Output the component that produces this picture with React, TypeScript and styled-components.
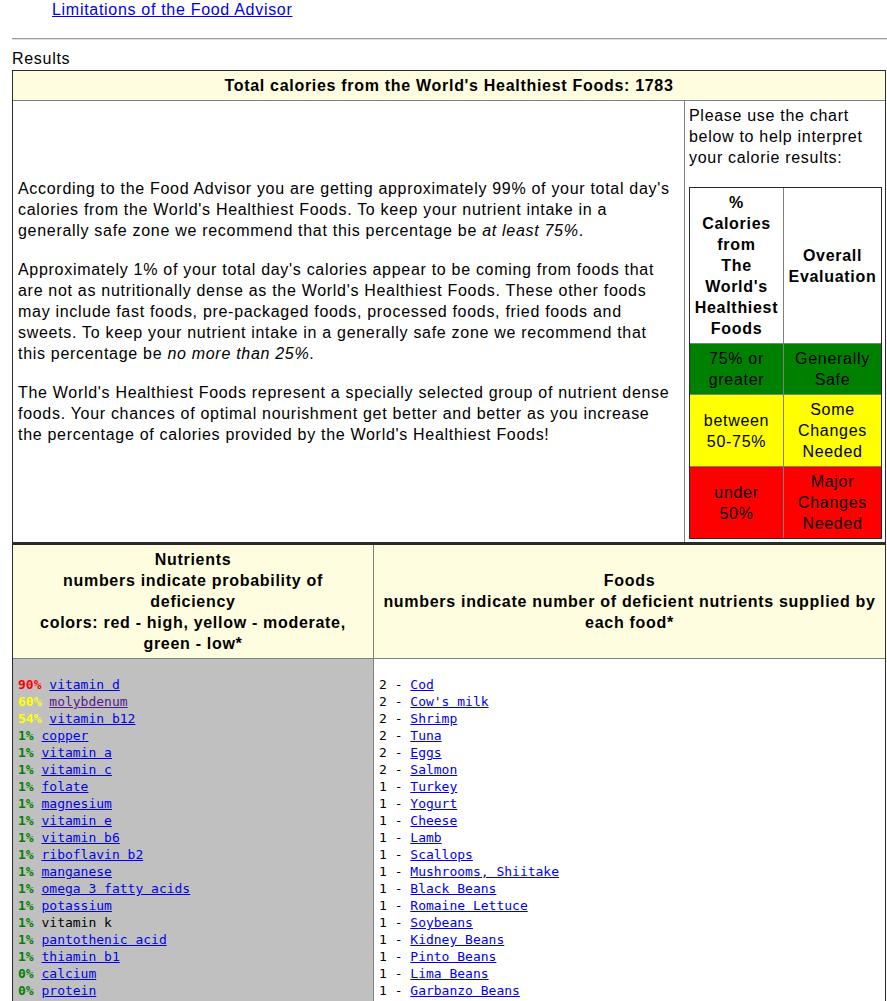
import React from "react";
import styled, { createGlobalStyle } from "styled-components";

const GlobalStyle = createGlobalStyle`
  body {
    margin: 0;
    background: #fff;
    font-family: "Liberation Sans", Arial, sans-serif;
    font-size: 16px;
    letter-spacing: 0.7px;
    color: #000;
  }
`;

const Page = styled.div`
  padding: 0 2px 0 12px;
  line-height: 21px;
`;

const TopLink = styled.a`
  display: block;
  margin-left: 40px;
  line-height: 20px;
  color: #0000ee;
`;

const Rule = styled.hr`
  margin: 18px -2px 8px 0;
  border: none;
  border-top: 1px solid #a0a0a0;
  border-bottom: 1px solid #e0e0e0;
`;

const Caption = styled.div`
  line-height: 21px;
  margin-bottom: 1px;
`;

const Table = styled.table<{ $topWidth?: number }>`
  width: 874px;
  border-collapse: separate;
  border-spacing: 0;
  border: 1px solid #2b2b2b;
  border-top-width: ${(p) => p.$topWidth ?? 1}px;
  line-height: 21px;

  & > tbody > tr > td {
    border-left: 1px solid #808080;
    border-top: 1px solid #808080;
  }
  & > tbody > tr > td:first-child {
    border-left: none;
  }
  & > tbody > tr:first-child > td {
    border-top: none;
  }
`;

const HeadCell = styled.td<{ $width?: number }>`
  background: #fffddf;
  font-weight: bold;
  text-align: center;
  vertical-align: middle;
  padding: 4px 6px;
  width: ${(p) => (p.$width ? `${p.$width}px` : "auto")};
`;

const TextCell = styled.td`
  vertical-align: middle;
  padding: 4px 11px 25px 5px;
`;

const Para = styled.p`
  margin: 0 0 18px;
  &:last-child {
    margin-bottom: 0;
  }
`;

const SideCell = styled.td`
  width: 192px;
  vertical-align: top;
  padding: 4px 3px 3px 4px;
`;

const ChartIntro = styled.div`
  margin-bottom: 19px;
`;

const Chart = styled.table`
  width: 193px;
  border-collapse: separate;
  border-spacing: 0;
  border: 1px solid #2b2b2b;
  line-height: 21px;

  & td {
    border-left: 1px solid #808080;
    border-top: 1px solid #808080;
    text-align: center;
    vertical-align: middle;
    padding: 4px 1px;
  }
  & td:first-child {
    border-left: none;
    width: 91px;
  }
  & tr:first-child td {
    border-top: none;
  }
`;

const ChartHead = styled.td`
  font-weight: bold;
`;

const ChartCell = styled.td<{ $bg: string }>`
  background: ${(p) => p.$bg};
`;

const ListCell = styled.td<{ $gray?: boolean }>`
  background: ${(p) => (p.$gray ? "#c0c0c0" : "#fff")};
  vertical-align: top;
  padding: 17px 5px 10px;
  font-family: "DejaVu Sans Mono", "Liberation Mono", monospace;
  font-size: 13px;
  letter-spacing: normal;
  line-height: 17px;
`;

const Line = styled.div`
  white-space: pre;
`;

const Pct = styled.span<{ $color: string }>`
  color: ${(p) => p.$color};
  font-weight: bold;
`;

const Link = styled.a<{ $visited?: boolean }>`
  color: ${(p) => (p.$visited ? "#551a8b" : "#0000ee")};
  text-decoration: underline;
`;

type Nutrient = { pct: string; name: string; link?: boolean; visited?: boolean };

const RED = "#ff0000";
const YELLOW = "#ffff00";
const GREEN = "#008000";

const nutrients: Nutrient[] = [
  { pct: "90%", name: "vitamin d" },
  { pct: "60%", name: "molybdenum", visited: true },
  { pct: "54%", name: "vitamin b12" },
  { pct: "1%", name: "copper" },
  { pct: "1%", name: "vitamin a" },
  { pct: "1%", name: "vitamin c" },
  { pct: "1%", name: "folate" },
  { pct: "1%", name: "magnesium" },
  { pct: "1%", name: "vitamin e" },
  { pct: "1%", name: "vitamin b6" },
  { pct: "1%", name: "riboflavin b2" },
  { pct: "1%", name: "manganese" },
  { pct: "1%", name: "omega 3 fatty acids" },
  { pct: "1%", name: "potassium" },
  { pct: "1%", name: "vitamin k", link: false },
  { pct: "1%", name: "pantothenic acid" },
  { pct: "1%", name: "thiamin b1" },
  { pct: "0%", name: "calcium" },
  { pct: "0%", name: "protein" },
];

const foods: [number, string][] = [
  [2, "Cod"],
  [2, "Cow's milk"],
  [2, "Shrimp"],
  [2, "Tuna"],
  [2, "Eggs"],
  [2, "Salmon"],
  [1, "Turkey"],
  [1, "Yogurt"],
  [1, "Cheese"],
  [1, "Lamb"],
  [1, "Scallops"],
  [1, "Mushrooms, Shiitake"],
  [1, "Black Beans"],
  [1, "Romaine Lettuce"],
  [1, "Soybeans"],
  [1, "Kidney Beans"],
  [1, "Pinto Beans"],
  [1, "Lima Beans"],
  [1, "Garbanzo Beans"],
];

function pctColor(pct: string) {
  const n = parseInt(pct, 10);
  if (n >= 75) return RED;
  if (n >= 50) return YELLOW;
  return GREEN;
}

export default function App() {
  return (
    <Page>
      <GlobalStyle />
      <TopLink href="#">Limitations of the Food Advisor</TopLink>
      <Rule />
      <Caption>Results</Caption>

      <Table>
        <tbody>
          <tr>
            <HeadCell colSpan={2}>Total calories from the World's Healthiest Foods: 1783</HeadCell>
          </tr>
          <tr>
            <TextCell>
              <Para>
                According to the Food Advisor you are getting approximately 99% of your total day's
                calories from the World's Healthiest Foods. To keep your nutrient intake in a
                generally safe zone we recommend that this percentage be <i>at least 75%</i>.
              </Para>
              <Para>
                Approximately 1% of your total day's calories appear to be coming from foods that
                are not as nutritionally dense as the World's Healthiest Foods. These other foods
                may include fast foods, pre-packaged foods, processed foods, fried foods and
                sweets. To keep your nutrient intake in a generally safe zone we recommend that
                this percentage be <i>no more than 25%</i>.
              </Para>
              <Para>
                The World's Healthiest Foods represent a specially selected group of nutrient dense
                foods. Your chances of optimal nourishment get better and better as you increase
                the percentage of calories provided by the World's Healthiest Foods!
              </Para>
            </TextCell>
            <SideCell>
              <ChartIntro>Please use the chart below to help interpret your calorie results:</ChartIntro>
              <Chart>
                <tbody>
                  <tr>
                    <ChartHead>
                      %<br />Calories<br />from<br />The<br />World's<br />Healthiest<br />Foods
                    </ChartHead>
                    <ChartHead>Overall Evaluation</ChartHead>
                  </tr>
                  <tr>
                    <ChartCell $bg={GREEN}>75% or greater</ChartCell>
                    <ChartCell $bg={GREEN}>Generally Safe</ChartCell>
                  </tr>
                  <tr>
                    <ChartCell $bg={YELLOW}>between<br />50-75%</ChartCell>
                    <ChartCell $bg={YELLOW}>Some Changes Needed</ChartCell>
                  </tr>
                  <tr>
                    <ChartCell $bg={RED}>under<br />50%</ChartCell>
                    <ChartCell $bg={RED}>Major Changes Needed</ChartCell>
                  </tr>
                </tbody>
              </Chart>
            </SideCell>
          </tr>
        </tbody>
      </Table>

      <Table $topWidth={2}>
        <tbody>
          <tr>
            <HeadCell $width={348}>
              Nutrients
              <br />
              numbers indicate probability of deficiency
              <br />
              colors: red - high, yellow - moderate, green - low*
            </HeadCell>
            <HeadCell>
              Foods
              <br />
              numbers indicate number of deficient nutrients supplied by each food*
            </HeadCell>
          </tr>
          <tr>
            <ListCell $gray>
              {nutrients.map((n) => (
                <Line key={n.name}>
                  <Pct $color={pctColor(n.pct)}>{n.pct}</Pct>{" "}
                  {n.link === false ? (
                    n.name
                  ) : (
                    <Link href="#" $visited={n.visited}>
                      {n.name}
                    </Link>
                  )}
                </Line>
              ))}
            </ListCell>
            <ListCell>
              {foods.map(([count, name]) => (
                <Line key={name}>
                  {count} - <Link href="#">{name}</Link>
                </Line>
              ))}
            </ListCell>
          </tr>
        </tbody>
      </Table>
    </Page>
  );
}
